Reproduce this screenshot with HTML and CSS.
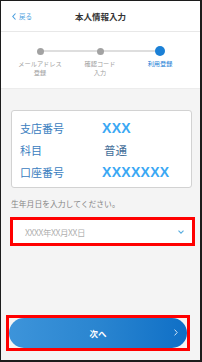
FILE: index.html
```html
<!DOCTYPE html>
<html lang="ja">
<head>
<meta charset="utf-8">
<title>本人情報入力</title>
<link rel="stylesheet" href="styles.css">
</head>
<body>
<div class="frame">
  <header class="header">
    <a class="back">
      <svg class="back-icon" width="4" height="7" viewBox="0 0 4 7"><path d="M3.5 0.5 L0.8 3.5 L3.5 6.5" fill="none" stroke="#4a9ede" stroke-width="1.1"/></svg>
      <span>戻る</span>
    </a>
    <h1 class="title">本人情報入力</h1>
    <span class="header-spacer"></span>
  </header>

  <section class="stepper">
    <div class="step first">
      <div class="dot-row"><span class="dot"></span></div>
      <div class="step-label">メールアドレス<br>登録</div>
    </div>
    <div class="step">
      <div class="dot-row"><span class="dot"></span></div>
      <div class="step-label">確認コード<br>入力</div>
    </div>
    <div class="step last active">
      <div class="dot-row"><span class="dot"></span></div>
      <div class="step-label">利用登録</div>
    </div>
  </section>

  <main class="main">
    <div class="card">
      <div class="row"><span class="label">支店番号</span><span class="value strong">XXX</span></div>
      <div class="row"><span class="label">科目</span><span class="value plain">普通</span></div>
      <div class="row"><span class="label">口座番号</span><span class="value strong">XXXXXXX</span></div>
    </div>

    <p class="hint">生年月日を入力してください。</p>

    <div class="select">
      <span class="placeholder">XXXX年XX月XX日</span>
      <svg class="chev-down" width="6" height="4" viewBox="0 0 6 4"><path d="M0.5 0.6 L3 3.2 L5.5 0.6" fill="none" stroke="#5aaee0" stroke-width="1.1"/></svg>
    </div>

    <div class="btn-outline">
      <button class="btn">
        <span class="btn-text">次へ</span>
        <svg class="btn-chev" width="4" height="7" viewBox="0 0 4 7"><path d="M0.6 0.6 L3.2 3.5 L0.6 6.4" fill="none" stroke="#cfe3f5" stroke-width="1"/></svg>
      </button>
    </div>
  </main>
</div>
</body>
</html>
```

FILE: styles.css
```css
* { box-sizing: border-box; margin: 0; padding: 0; }
html, body { width: 202px; height: 362px; background: #ffffff; }
body {
  font-family: "Noto Sans CJK JP", "Noto Sans", sans-serif;
  overflow: hidden;
}
.frame {
  width: 202px;
  height: 362px;
  border: 1px solid #1c1c1c;
  border-right-width: 2px;
  border-bottom-width: 2px;
  margin-right: 1px;
  display: flex;
  flex-direction: column;
  background: #ffffff;
}
.header {
  height: 31px;
  flex: none;
  border-bottom: 1px solid #e8e8e8;
  display: flex;
  align-items: center;
  padding: 0 10px;
}
.back {
  width: 40px;
  display: flex;
  align-items: center;
  gap: 3px;
  color: #4a9ede;
  font-size: 6.5px;
  padding-left: 1px;
}
.back-icon { display: block; }
.title {
  flex: 1;
  text-align: center;
  font-size: 8.5px;
  font-weight: 700;
  color: #333333;
  letter-spacing: 0;
}
.header-spacer { width: 40px; }

.stepper {
  height: 57px;
  flex: none;
  display: flex;
  padding: 14px 9px 0;
  border-bottom: 1px solid #ececec;
}
.step {
  width: 60px;
  display: flex;
  flex-direction: column;
  align-items: center;
}
.dot-row {
  position: relative;
  width: 100%;
  height: 10px;
  display: flex;
  align-items: center;
  justify-content: center;
}
.dot-row::before, .dot-row::after {
  content: "";
  position: absolute;
  top: 4px;
  height: 2px;
  width: 50%;
  background: #dedede;
}
.dot-row::before { left: 0; }
.dot-row::after { right: 0; }
.step.first .dot-row::before { display: none; }
.step.last .dot-row::after { display: none; }
.dot {
  position: relative;
  z-index: 1;
  width: 7px;
  height: 7px;
  border-radius: 50%;
  background: #a2a2a2;
}
.step.active .dot {
  width: 10px;
  height: 10px;
  background: #1b80d6;
}
.step-label {
  margin-top: 3px;
  font-size: 6.2px;
  line-height: 9px;
  color: #a0a0a0;
  text-align: center;
}
.step.active .step-label { color: #1b80d6; }

.main {
  flex: 1;
  background: #f4f4f4;
  display: flex;
  flex-direction: column;
  padding: 21px 9px 9px;
}
.card {
  margin-left: 1px;
  width: 181px;
  height: 78px;
  background: #ffffff;
  border: 1px solid #d2d2d2;
  border-radius: 3px;
  padding: 6px 0 3px 8px;
}
.row {
  height: 22px;
  display: flex;
  align-items: center;
}
.label {
  width: 82px;
  font-size: 11px;
  color: #3b80c0;
}
.value.strong {
  font-family: "Liberation Sans", Arial, sans-serif;
  font-weight: 700;
  font-size: 14px;
  color: #3aa8f4;
  letter-spacing: 0.3px;
}
.value.plain {
  font-size: 11.5px;
  color: #45709a;
  padding-left: 2px;
}
.hint {
  margin-top: 11px;
  margin-left: 1px;
  font-size: 7.8px;
  line-height: 10px;
  color: #858585;
}
.select {
  margin-top: 8px;
  width: 185px;
  height: 29px;
  border: 3px solid #ff0000;
  background: #ffffff;
  display: flex;
  align-items: center;
  justify-content: space-between;
  padding: 0 8px 0 12px;
}
.placeholder {
  font-size: 8.5px;
  color: #b0b0b0;
  letter-spacing: -0.4px;
}
.chev-down { display: block; }

.btn-outline {
  margin-top: auto;
  margin-left: -4px;
  width: 184px;
  height: 36px;
  border: 3px solid #ff0000;
  background: #f4f4f4;
}
.btn {
  width: 100%;
  height: 100%;
  border: none;
  border-radius: 15px;
  background: linear-gradient(90deg, #3d94da 0%, #2a85d0 50%, #0f6fc6 100%);
  display: flex;
  align-items: center;
  justify-content: center;
  position: relative;
  font-family: "Noto Sans CJK JP", "Noto Sans", sans-serif;
}
.btn-text {
  color: #ffffff;
  font-size: 8.5px;
  font-weight: 700;
}
.btn-chev {
  position: absolute;
  right: 9px;
  top: 11px;
}
```
